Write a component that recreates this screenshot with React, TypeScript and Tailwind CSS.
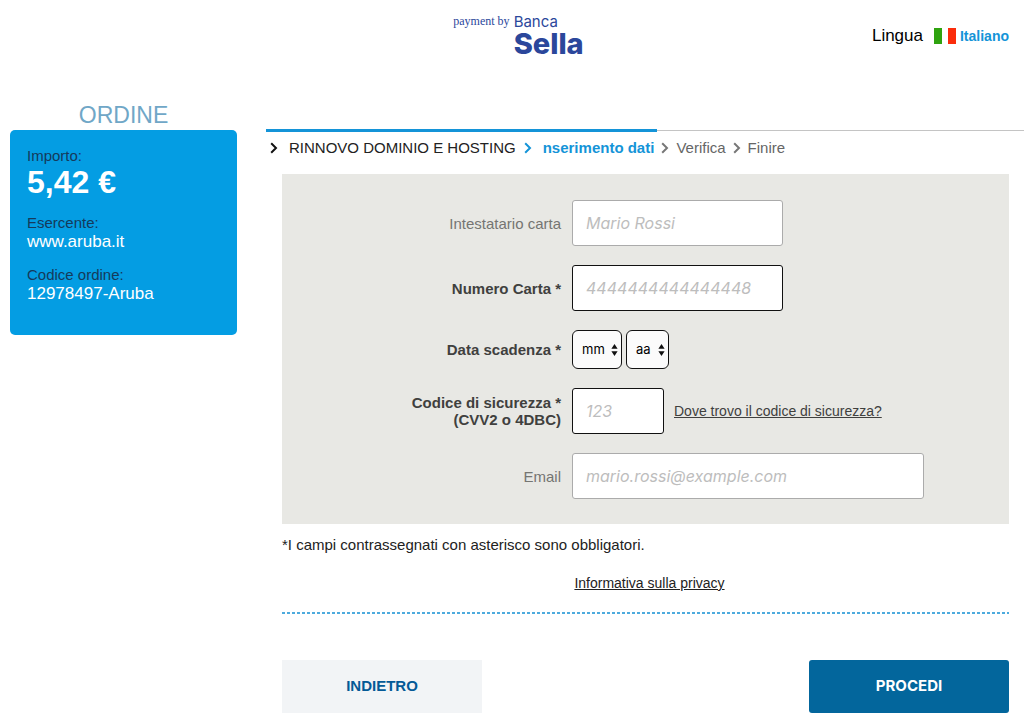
import type { ReactNode } from "react";

function Chevron({ className }: { className: string }) {
  return (
    <svg viewBox="0 0 8 12" className={`h-3 w-2 shrink-0 ${className}`} fill="none" stroke="currentColor" strokeWidth="2" aria-hidden="true">
      <path d="M1.2 1.2 6 6 1.2 10.8" />
    </svg>
  );
}

function Label({ htmlFor, required, children }: { htmlFor: string; required?: boolean; children: ReactNode }) {
  return (
    <label
      htmlFor={htmlFor}
      className={`text-right text-[15px] leading-[17px] ${required ? "font-bold text-[#40403e]" : "text-[#757572]"}`}
    >
      {children}
    </label>
  );
}

const inputBase =
  "h-[46px] rounded-[3px] border bg-white px-[13px] font-[Inter,sans-serif] text-base text-[#222] placeholder:italic placeholder:text-[#bdbdbd]";

function SmallSelect({ id, label, text, width }: { id: string; label: string; text: string; width: string }) {
  return (
    <div className={`relative ${width}`}>
      <select
        id={id}
        aria-label={label}
        defaultValue=""
        className="h-[39px] w-full appearance-none rounded-[6px] border border-[#111] bg-[#fbfbfb] pl-[9px] font-[Inter,sans-serif] text-[13px] text-black"
      >
        <option value="">{text}</option>
      </select>
      <svg viewBox="0 0 7 12" className="pointer-events-none absolute top-[14px] right-1 h-3 w-[7px]" fill="#111" aria-hidden="true">
        <path d="M3.5 0 6.6 4.8H.4zM3.5 12 .4 7.2h6.2z" />
      </svg>
    </div>
  );
}

const orderRows = [
  { label: "Esercente:", value: "www.aruba.it" },
  { label: "Codice ordine:", value: "12978497-Aruba" },
];

export default function App() {
  return (
    <div className="bg-white font-['Liberation_Sans',Arial,sans-serif] text-[#222]">
      {/* Header */}
      <header className="grid h-[100px] grid-cols-[1fr_auto_1fr] items-start pr-[15px] pl-7">
        <div className="col-start-2 flex gap-1 pt-[14px] text-[#2b479b]">
          <span className="font-['Liberation_Serif',serif] text-[12px] leading-[14px]">payment by</span>
          <div className="font-[Inter,sans-serif]">
            <div className="text-[15px] leading-4 font-normal">Banca</div>
            <div className="text-[29px] leading-7 font-extrabold">Sella</div>
          </div>
        </div>
        <div className="flex items-center justify-end pt-[26px]">
          <span className="mr-[11px] text-[17px] leading-5 text-black">Lingua</span>
          <svg viewBox="0 0 22 16" className="mr-1 h-4 w-[22px]" aria-hidden="true">
            <rect width="8" height="16" fill="#2fa30f" />
            <rect x="8" width="6" height="16" fill="#fff" />
            <rect x="14" width="8" height="16" fill="#fb2c0b" />
          </svg>
          <a href="#lingua" className="text-[14px] leading-5 font-bold text-[#1494d8]">Italiano</a>
        </div>
      </header>

      <div className="flex gap-[29px] pl-[10px]">
        {/* Order summary */}
        <aside className="w-[227px] shrink-0">
          <h2 className="text-center text-[23px] leading-[30px] text-[#70a7c7]">ORDINE</h2>
          <div className="rounded-[5px] bg-[#049de3] px-[17px] pt-[17px] pb-8">
            <div className="text-[15px] leading-[18px] text-[#153a5b]">Importo:</div>
            <div className="text-[32px] leading-[34px] font-bold text-white">5,42 €</div>
            {orderRows.map((row) => (
              <div key={row.label} className="pt-[15px]">
                <div className="text-[15px] leading-[18px] text-[#153a5b]">{row.label}</div>
                <div className="text-[17px] leading-[19px] text-white">{row.value}</div>
              </div>
            ))}
          </div>
        </aside>

        <main className="min-w-0 flex-1 pt-[29px]">
          {/* Progress */}
          <div className="flex h-[3px] items-center">
            <div className="h-full w-[391px] bg-[#1494d8]" />
            <div className="h-px flex-1 bg-[#c4c4c4]" />
          </div>
          <nav className="flex h-[42px] items-start pt-[6px] pl-1 text-[15px] leading-5">
            <div className="flex items-center gap-[11px]">
              <Chevron className="text-[#111]" />
              <span>RINNOVO DOMINIO E HOSTING</span>
            </div>
            <div className="ml-2 flex items-center gap-[11px] font-bold text-[#1494d8]">
              <Chevron className="text-[#1494d8]" />
              <span>nserimento dati</span>
            </div>
            <div className="ml-[7px] flex items-center gap-[7px] text-[#666]">
              <Chevron className="text-[#777]" />
              <span>Verifica</span>
            </div>
            <div className="ml-[7px] flex items-center gap-[7px] text-[#666]">
              <Chevron className="text-[#777]" />
              <span>Finire</span>
            </div>
          </nav>

          <form className="pr-[15px] pl-4" onSubmit={(e) => e.preventDefault()}>
            <div className="grid grid-cols-[279px_1fr] items-center gap-x-[11px] gap-y-[19px] bg-[#e8e8e4] pt-[26px] pb-[25px]">
              <Label htmlFor="holder">Intestatario carta</Label>
              <input id="holder" placeholder="Mario Rossi" className={`w-[211px] border-[#ababab] ${inputBase}`} />

              <Label htmlFor="number" required>Numero Carta *</Label>
              <input id="number" placeholder="4444444444444448" className={`w-[211px] border-[#111] ${inputBase}`} />

              <Label htmlFor="month" required>Data scadenza *</Label>
              <div className="flex gap-1">
                <SmallSelect id="month" label="Mese" text="mm" width="w-[50px]" />
                <SmallSelect id="year" label="Anno" text="aa" width="w-[43px]" />
              </div>

              <Label htmlFor="cvv" required>
                Codice di sicurezza *<br />(CVV2 o 4DBC)
              </Label>
              <div className="flex items-center gap-[10px]">
                <input id="cvv" placeholder="123" className={`w-[92px] border-[#111] ${inputBase}`} />
                <a href="#codice" className="text-[14px] leading-5 text-[#40403e] underline">
                  Dove trovo il codice di sicurezza?
                </a>
              </div>

              <Label htmlFor="email">Email</Label>
              <input id="email" type="email" placeholder="mario.rossi@example.com" className={`w-[352px] border-[#ababab] ${inputBase}`} />
            </div>

            <p className="pt-[11px] text-[15px] leading-5">*I campi contrassegnati con asterisco sono obbligatori.</p>
            <p className="pt-[18px] pl-2 text-center text-[14px] leading-5">
              <a href="#privacy" className="underline">Informativa sulla privacy</a>
            </p>

            <div className="mt-[19px] h-[2px] bg-[repeating-linear-gradient(90deg,#4dabde_0_3px,transparent_3px_5px)]" />

            <div className="flex justify-between pt-[46px] pb-[13px]">
              <button type="button" className="h-[53px] w-[200px] bg-[#f2f4f6] text-[15px] font-bold text-[#045a97]">
                INDIETRO
              </button>
              <button type="submit" className="h-[53px] w-[200px] rounded-[3px] bg-[#03669c] font-[Inter,sans-serif] text-[15px] font-bold text-white">
                PROCEDI
              </button>
            </div>
          </form>
        </main>
      </div>
    </div>
  );
}
